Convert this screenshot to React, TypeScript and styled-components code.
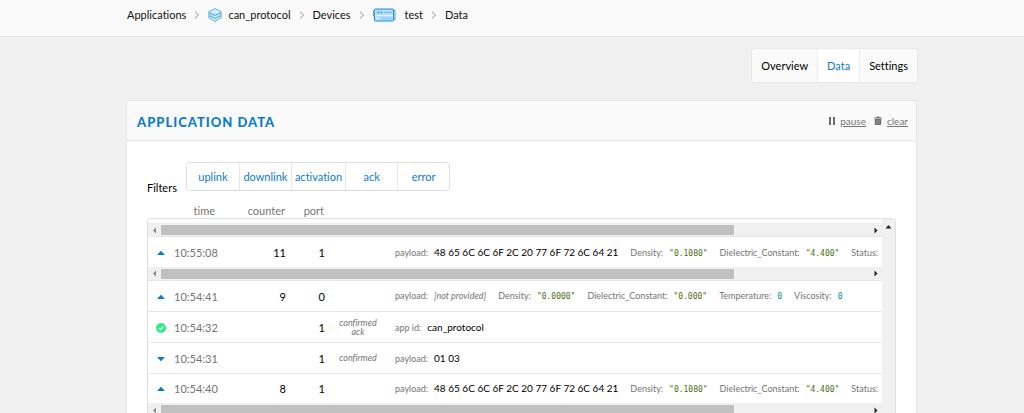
import React from "react";
import styled, { createGlobalStyle, css } from "styled-components";

const GlobalStyle = createGlobalStyle`
  *, *::before, *::after { box-sizing: border-box; }
  body {
    margin: 0;
    background: #f0f0f0;
    color: #000;
    font-family: Lato, "Liberation Sans", sans-serif;
    font-size: 11px;
    line-height: 16px;
    font-variant-ligatures: none;
  }
`;

const blue = "#0b7cc9";
const grey = "#757575";
const line = "#e6e6e6";

const Page = styled.div`
  display: flex;
  flex-direction: column;
  height: 100vh;
  overflow: hidden;
`;

const TopBar = styled.header`
  flex: none;
  height: 37px;
  padding: 7px 107px 0 127px;
  background: #fafafa;
  border-bottom: 1px solid #e8e8e8;
`;

const Crumbs = styled.ol`
  display: flex;
  align-items: center;
  gap: 8px;
  margin: 0;
  padding: 0;
  list-style: none;
`;

const Crumb = styled.li`
  display: flex;
  align-items: center;
  gap: 8px;
`;

const CrumbLink = styled.a<{ $gap?: number }>`
  display: flex;
  align-items: center;
  gap: ${(p) => p.$gap ?? 6}px;
  color: #111;
  text-decoration: none;
`;

const Main = styled.main`
  flex: 1;
  min-height: 0;
  display: flex;
  flex-direction: column;
  padding: 12px 107px 0 126px;
`;

const Tabs = styled.nav`
  align-self: flex-end;
  display: flex;
  background: #fafafa;
  border-radius: 3px;
  box-shadow: 0 0 1px 1px #e8e8e8;
  overflow: hidden;
`;

const Tab = styled.a<{ $active?: boolean }>`
  padding: 9px 9px 8px;
  color: ${(p) => (p.$active ? blue : "#000")};
  background: ${(p) => (p.$active ? "#fff" : "transparent")};
  text-decoration: none;
  & + & {
    border-left: 1px solid #ececec;
  }
`;

const Panel = styled.section`
  flex: 1;
  min-height: 0;
  display: flex;
  flex-direction: column;
  margin-top: 18px;
  background: #fff;
  border: 1px solid ${line};
  border-bottom: 0;
  border-radius: 4px 4px 0 0;
`;

const PanelHead = styled.div`
  flex: none;
  display: flex;
  align-items: center;
  justify-content: space-between;
  height: 40px;
  padding: 0 8px 0 10px;
  background: #fafafa;
  border-bottom: 1px solid ${line};
  border-radius: 4px 4px 0 0;
`;

const Title = styled.h1`
  margin: 0;
  padding-top: 2px;
  color: ${blue};
  font-size: 13px;
  font-weight: 900;
  letter-spacing: 1px;
  text-transform: uppercase;
`;

const Actions = styled.div`
  display: flex;
  gap: 8px;
`;

const Action = styled.button`
  display: flex;
  align-items: center;
  gap: 5px;
  padding: 0;
  border: 0;
  background: none;
  color: ${grey};
  font: inherit;
  font-size: 10px;
  cursor: pointer;
  span {
    text-decoration: underline;
  }
`;

const PanelBody = styled.div`
  flex: 1;
  min-height: 0;
  display: flex;
  flex-direction: column;
  padding: 21px 20px 0;
`;

const Filters = styled.div`
  flex: none;
  display: flex;
  align-items: flex-end;
  gap: 9px;
  height: 34px;
`;

const FilterGroup = styled.div`
  align-self: flex-start;
  display: flex;
  border: 1px solid #dfdfdf;
  border-radius: 4px;
`;

const Filter = styled.button`
  min-width: 52px;
  padding: 6px 3px 5px;
  border: 0;
  background: none;
  color: ${blue};
  font: inherit;
  cursor: pointer;
  & + & {
    border-left: 1px solid ${line};
  }
`;

const DataTable = styled.table`
  width: 100%;
  table-layout: fixed;
  border-collapse: collapse;
`;

const ColumnHead = styled.th`
  height: 22px;
  padding: 8px 0 0;
  color: ${grey};
  font-weight: 400;
  line-height: 14px;
  text-align: right;
`;

const List = styled.div`
  flex: 1;
  min-height: 0;
  display: flex;
  border: 1px solid #dfdfdf;
  border-bottom: 0;
  border-radius: 4px 4px 0 0;
  overflow: hidden;
`;

const ListContent = styled.div`
  flex: 1;
  min-width: 0;
  padding-top: 4px;
`;

const ListBar = styled.div`
  flex: none;
  width: 13px;
  padding-top: 4px;
  background: #f0f0f0;
  text-align: center;
  line-height: 0;
`;

const Cell = styled.td<{ $kind?: "time" | "note" | "icon"; $open?: boolean }>`
  height: ${(p) => (p.$open ? 30 : 31)}px;
  padding: 2px 0 0;
  border-bottom: ${(p) => (p.$open ? "0" : `1px solid ${line}`)};
  white-space: nowrap;
  text-align: right;
  ${(p) =>
    p.$kind === "icon" &&
    css`
      text-align: center;
      line-height: 0;
    `}
  ${(p) =>
    p.$kind === "time" &&
    css`
      color: ${grey};
    `}
  ${(p) =>
    p.$kind === "note" &&
    css`
      padding: 0 12px;
      color: ${grey};
      font-size: 9px;
      font-style: italic;
      line-height: 9px;
      text-align: center;
      white-space: normal;
    `}
`;

const Details = styled(Cell)`
  overflow: hidden;
  text-align: left;
`;

const Fields = styled.dl`
  display: flex;
  align-items: baseline;
  gap: 12px;
  margin: 0;
  padding-left: 4px;
`;

const Field = styled.div`
  display: flex;
  align-items: baseline;
  gap: 6px;
  dt {
    color: ${grey};
    font-size: 9px;
  }
`;

const Value = styled.dd<{ $kind?: "string" | "number" | "none" }>`
  margin: 0;
  font-size: 10px;
  ${(p) =>
    (p.$kind === "string" || p.$kind === "number") &&
    css`
      color: ${p.$kind === "string" ? "#4d6b12" : "#0f7f99"};
      font-family: "DejaVu Sans Mono", monospace;
      font-size: 8px;
    `}
  ${(p) =>
    p.$kind === "none" &&
    css`
      color: ${grey};
      font-size: 9px;
      font-style: italic;
    `}
`;

const BarCell = styled.td`
  padding: 0;
  border-bottom: 1px solid ${line};
`;

const ScrollBar = styled.div`
  display: flex;
  align-items: center;
  height: 13px;
  padding: 1px 0 0;
  background: #f0f0f0;
`;

const ScrollEnd = styled.span`
  flex: none;
  width: 13px;
  text-align: center;
  line-height: 0;
`;

const ScrollTrack = styled.div`
  flex: 1;
`;

const ScrollThumb = styled.div`
  width: 81%;
  height: 10px;
  background: #c0c0c0;
`;

const Chevron = () => (
  <svg width="6" height="8" viewBox="0 0 6 8" fill="none" stroke="#8f8f8f" aria-hidden="true">
    <path d="M1 0.6 4.6 4 1 7.4" />
  </svg>
);

const LayersIcon = () => (
  <svg width="14" height="14" viewBox="0 0 14 14" fill="#d4ecfb" stroke="#45a6e4" strokeWidth=".8" strokeLinejoin="round" aria-hidden="true">
    <path d="M.8 9.800V7.600L7 10.400l6.200-2.800V9.800L7 13.400Z" />
    <path d="M.8 7V4.800L7 7.600l6.200-2.800V7L7 10.400Z" />
    <path d="M.8 4.200V3.600L7 .600l6.200 3V4.200L7 7.400Z" />
  </svg>
);

const DeviceIcon = () => (
  <svg width="23" height="14" viewBox="0 0 23 14" fill="none" stroke="#1e8fdc" aria-hidden="true">
    <path d="M20.500 2.500h1.500v9h-1.500" stroke="#3ba0e6" />
    <rect x="1.500" y="1" width="19" height="12" rx="1" fill="#b4dcf8" />
    <path d="M2 2.800H.6v2.200H2M2 6H.6v2.200H2" fill="#8accf5" />
    <path d="M4.500 4.500h1.500M7.500 4.500h1.500" strokeWidth="1.600" />
    <path d="M11 4.500h8" stroke="#6cbcf0" />
    <path d="M2.500 7.500h17.500" stroke="#e9f6ff" />
    <path d="M3.500 10.500h2.500" stroke="#e9f6ff" strokeWidth="1.500" />
    <path d="M8 10.500h11" stroke="#8accf5" strokeWidth="1.500" />
  </svg>
);

const PauseIcon = () => (
  <svg width="6" height="8" viewBox="0 0 6 8" fill="#6e6e6e" aria-hidden="true">
    <path d="M0 0h2v8H0zM4 0h2v8H4z" />
  </svg>
);

const TrashIcon = () => (
  <svg width="8" height="9" viewBox="0 0 8 9" aria-hidden="true">
    <path d="M0 1.500h2.400L3 .4h2l.6 1.100H8v1H0zM.8 3h6.400v5.200l-.6.8H1.400l-.6-.8z" fill="#6e6e6e" />
    <path d="M2.700 4v4M4 4v4M5.300 4v4" stroke="#aaa" strokeWidth=".5" />
  </svg>
);

const ArrowIcon = ({ dir, color = "#222" }: { dir: "up" | "left" | "right"; color?: string }) => {
  const d = { up: "M0.5 5.500 3.500 2l3 3.500Z", left: "M5 .5v6L2 3.500Z", right: "M2.500 .5v6l3-3Z" }[dir];
  return (
    <svg width="7" height="7" viewBox="0 0 7 7" fill={color} aria-hidden="true">
      <path d={d} />
    </svg>
  );
};

type Kind = "uplink" | "downlink" | "ack";

const KindIcon = ({ kind }: { kind: Kind }) =>
  kind === "ack" ? (
    <svg width="10" height="10" viewBox="0 0 10 10" role="img" aria-label="ack">
      <circle cx="5" cy="5" r="5" fill="#29ef83" />
      <path d="m2.800 5.200 1.600 1.500 2.900-3.200" fill="none" stroke="#fff" strokeWidth="1.400" />
    </svg>
  ) : (
    <svg width="8" height="10" viewBox="0 0 8 10" fill={blue} role="img" aria-label={kind}>
      <path d={kind === "uplink" ? "M0 7 4 2.800 8 7Z" : "M0 3h8L4 7.200Z"} />
    </svg>
  );

type FieldData = { label: string; value?: string; kind?: "string" | "number" | "none" };
type Entry = {
  kind: Kind;
  time: string;
  counter?: number;
  port: number;
  note?: string;
  fields: FieldData[];
  scrolls?: boolean;
};

const measured: FieldData[] = [
  { label: "payload:", value: "48 65 6C 6C 6F 2C 20 77 6F 72 6C 64 21" },
  { label: "Density:", value: '"0.1080"', kind: "string" },
  { label: "Dielectric_Constant:", value: '"4.400"', kind: "string" },
  { label: "Status:" },
];

const entries: Entry[] = [
  { kind: "uplink", time: "10:55:08", counter: 11, port: 1, fields: measured, scrolls: true },
  {
    kind: "uplink",
    time: "10:54:41",
    counter: 9,
    port: 0,
    fields: [
      { label: "payload:", value: "[not provided]", kind: "none" },
      { label: "Density:", value: '"0.0000"', kind: "string" },
      { label: "Dielectric_Constant:", value: '"0.000"', kind: "string" },
      { label: "Temperature:", value: "0", kind: "number" },
      { label: "Viscosity:", value: "0", kind: "number" },
    ],
  },
  { kind: "ack", time: "10:54:32", port: 1, note: "confirmed ack", fields: [{ label: "app id:", value: "can_protocol" }] },
  { kind: "downlink", time: "10:54:31", port: 1, note: "confirmed", fields: [{ label: "payload:", value: "01 03" }] },
  { kind: "uplink", time: "10:54:40", counter: 8, port: 1, fields: measured, scrolls: true },
];

const Column = styled.col<{ $width?: number }>`
  width: ${(p) => (p.$width ? `${p.$width}px` : "auto")};
`;

const Columns = () => (
  <colgroup>
    <Column $width={26} />
    <Column $width={42} />
    <Column $width={70} />
    <Column $width={39} />
    <Column $width={66} />
    <Column />
  </colgroup>
);

const ScrollRow = () => (
  <tr aria-hidden="true">
    <BarCell colSpan={6}>
      <ScrollBar>
        <ScrollEnd>
          <ArrowIcon dir="left" color="#888" />
        </ScrollEnd>
        <ScrollTrack>
          <ScrollThumb />
        </ScrollTrack>
        <ScrollEnd>
          <ArrowIcon dir="right" />
        </ScrollEnd>
      </ScrollBar>
    </BarCell>
  </tr>
);

const EntryRow = ({ entry }: { entry: Entry }) => (
  <>
    <tr>
      <Cell $kind="icon" $open={entry.scrolls}>
        <KindIcon kind={entry.kind} />
      </Cell>
      <Cell $kind="time" $open={entry.scrolls}>{entry.time}</Cell>
      <Cell $open={entry.scrolls}>{entry.counter}</Cell>
      <Cell $open={entry.scrolls}>{entry.port}</Cell>
      <Cell $kind="note" $open={entry.scrolls}>{entry.note}</Cell>
      <Details $open={entry.scrolls}>
        <Fields>
          {entry.fields.map((f) => (
            <Field key={f.label}>
              <dt>{f.label}</dt>
              {f.value && <Value $kind={f.kind}>{f.value}</Value>}
            </Field>
          ))}
        </Fields>
      </Details>
    </tr>
    {entry.scrolls && <ScrollRow />}
  </>
);

export default function App() {
  return (
    <Page>
      <GlobalStyle />
      <TopBar>
        <nav aria-label="Breadcrumb">
          <Crumbs>
            <Crumb>
              <CrumbLink href="#applications">Applications</CrumbLink>
              <Chevron />
            </Crumb>
            <Crumb>
              <CrumbLink href="#can_protocol">
                <LayersIcon />
                can_protocol
              </CrumbLink>
              <Chevron />
            </Crumb>
            <Crumb>
              <CrumbLink href="#devices">Devices</CrumbLink>
              <Chevron />
            </Crumb>
            <Crumb>
              <CrumbLink href="#test" $gap={9}>
                <DeviceIcon />
                test
              </CrumbLink>
              <Chevron />
            </Crumb>
            <Crumb>
              <CrumbLink href="#data">Data</CrumbLink>
            </Crumb>
          </Crumbs>
        </nav>
      </TopBar>
      <Main>
        <Tabs aria-label="Device">
          <Tab href="#overview">Overview</Tab>
          <Tab href="#data" $active aria-current="page">Data</Tab>
          <Tab href="#settings">Settings</Tab>
        </Tabs>
        <Panel>
          <PanelHead>
            <Title>Application Data</Title>
            <Actions>
              <Action type="button">
                <PauseIcon />
                <span>pause</span>
              </Action>
              <Action type="button">
                <TrashIcon />
                <span>clear</span>
              </Action>
            </Actions>
          </PanelHead>
          <PanelBody>
            <Filters>
              <span id="filters-label">Filters</span>
              <FilterGroup role="group" aria-labelledby="filters-label">
                {["uplink", "downlink", "activation", "ack", "error"].map((name) => (
                  <Filter key={name} type="button">{name}</Filter>
                ))}
              </FilterGroup>
            </Filters>
            <DataTable>
              <Columns />
              <thead>
                <tr>
                  <ColumnHead />
                  <ColumnHead scope="col">time</ColumnHead>
                  <ColumnHead scope="col">counter</ColumnHead>
                  <ColumnHead scope="col">port</ColumnHead>
                  <ColumnHead />
                  <ColumnHead />
                </tr>
              </thead>
            </DataTable>
            <List>
              <ListContent>
                <DataTable aria-label="Application data">
                  <Columns />
                  <tbody>
                    <ScrollRow />
                    {entries.map((entry) => (
                      <EntryRow key={entry.time} entry={entry} />
                    ))}
                  </tbody>
                </DataTable>
              </ListContent>
              <ListBar aria-hidden="true">
                <ArrowIcon dir="up" />
              </ListBar>
            </List>
          </PanelBody>
        </Panel>
      </Main>
    </Page>
  );
}
